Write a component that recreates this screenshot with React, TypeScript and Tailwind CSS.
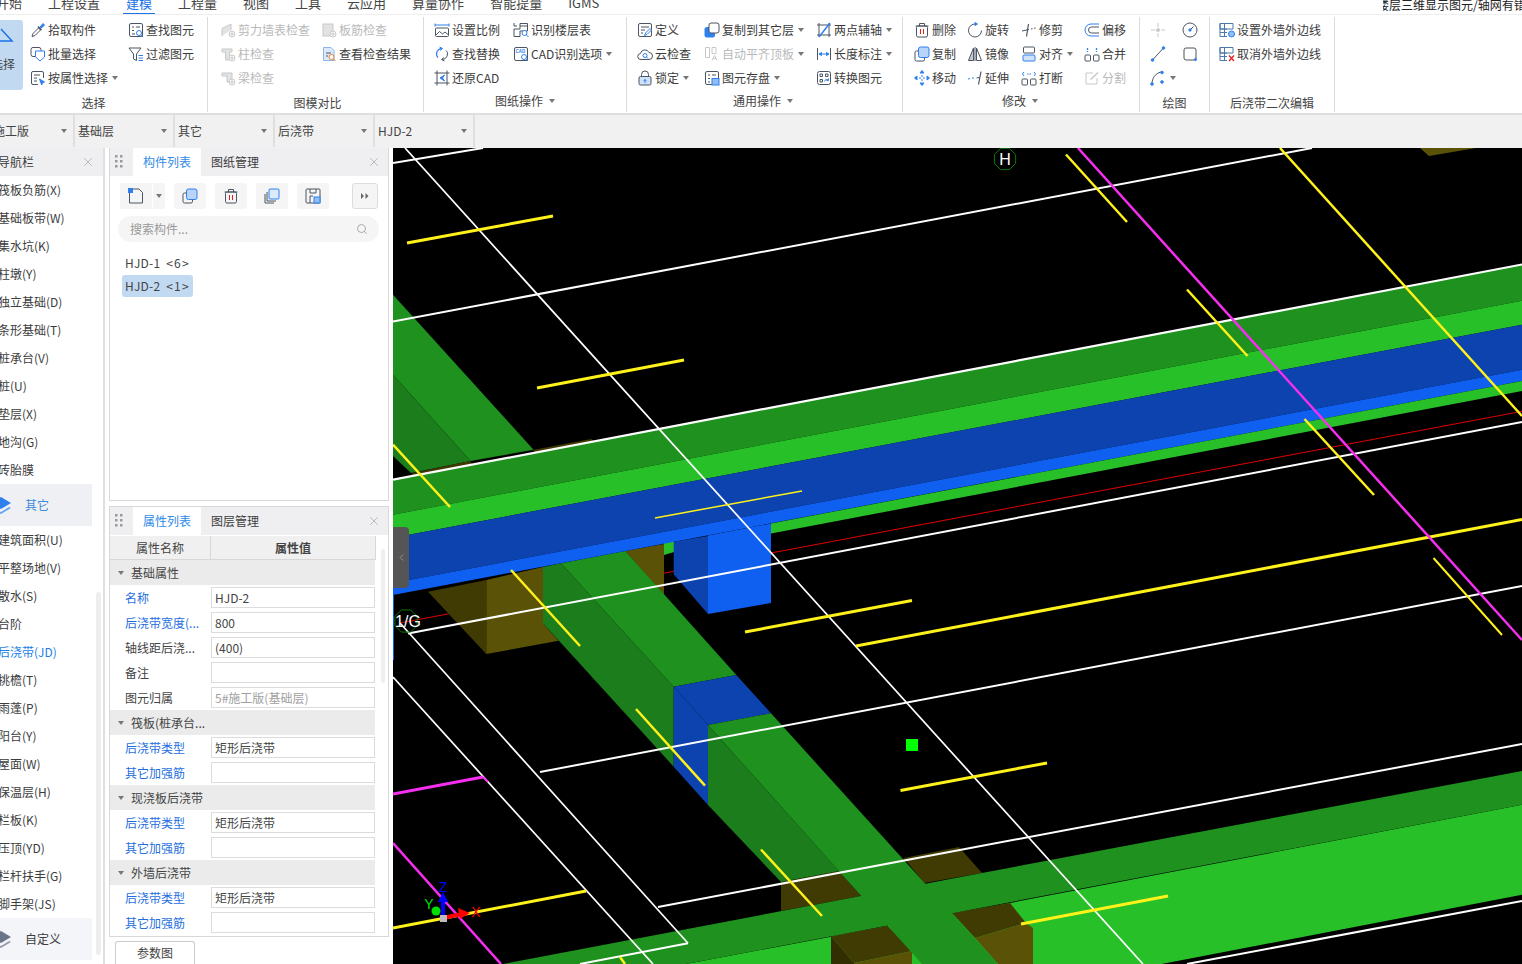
import React from 'react'
import { ChevronLeft, Search, X } from 'lucide-react'

const D = '#4b5563'
const B = '#2f80ed'
const G = '#c8c8c8'
const R = '#e02020'

const Svg = ({ children, c = D }: { children: React.ReactNode; c?: string }) => (
  <svg viewBox="0 0 16 16" className="w-4 h-4 shrink-0" fill="none" stroke={c} strokeWidth="1">
    {children}
  </svg>
)

const Caret = ({ className = '' }: { className?: string }) => (
  <svg viewBox="0 0 6 4" className={`w-[6px] h-[4px] shrink-0 ${className}`}>
    <path d="M0 0H6L3 4Z" fill="#777" />
  </svg>
)

const icons: Record<string, React.ReactNode> = {
  pick: <Svg><path d="M2 14.5l1-3 5.5-5.5 2 2L5 13.500z" /><path d="M8 4.500l3.500 3.500" stroke={D} strokeWidth="1.500" /><path d="M10 5l3-3.500 1.500 1.500-3 3z" fill={B} stroke={B} /></Svg>,
  batch: <Svg><rect x="1" y="1.500" width="10" height="9" rx="2" /><path d="M5.500 5h9v6l-4.500 4-4.500-4z" fill="#fff" stroke={B} /></Svg>,
  attr: <Svg><path d="M8 14.500H3a1.500 1.500 0 0 1-1.500-1.500V3A1.500 1.500 0 0 1 3 1.500h9A1.500 1.500 0 0 1 13.500 3v5" /><path d="M4 5h6M4 8h3M4 11h3" /><path d="M9.500 9l5 3-2 .8-.8 2.200z" fill={B} stroke={B} /></Svg>,
  find: <Svg><rect x="1.500" y="1.500" width="13" height="13" rx="1.500" /><path d="M4 5h2M8 5h4M4 8.500h2M4 12h3" /><circle cx="11" cy="11" r="2.500" fill="#fff" stroke={B} /><path d="M13 13l2 2" stroke={B} /></Svg>,
  filter: <Svg><path d="M1 2h12L8.500 8v6.500l-3-1.500V8z" /><path d="M10.500 9.500H15M10.500 12H15M10.500 14.500H15" stroke={B} /></Svg>,
  wallchk: <Svg c={G}><path d="M2 14V6.500L11 2v6" fill="#e3e3e3" /><circle cx="12" cy="12" r="3" fill="#fff" /><path d="M12 10v4M10 12h4" /></Svg>,
  barchk: <Svg c={G}><rect x="2" y="2" width="10" height="12" fill="#e3e3e3" /><circle cx="12" cy="12" r="3" fill="#fff" /><path d="M12 10v4M10 12h4" /></Svg>,
  colchk: <Svg c={G}><path d="M2 3h10v3H9.500v8h-4V6H2z" fill="#e3e3e3" /><circle cx="12" cy="12" r="3" fill="#fff" /><path d="M12 10v4M10 12h4" /></Svg>,
  beamchk: <Svg c={G}><path d="M2 3h10v9H7V6H2z" fill="#e3e3e3" /><circle cx="12" cy="12" r="3" fill="#fff" /><path d="M12 10v4M10 12h4" /></Svg>,
  result: <Svg><path d="M2.500 1.500H10l3 3v10H2.500z" fill="#dbe9fb" stroke="#8fb7ea" /><path d="M5 7h5M5 10h2" stroke={D} /><circle cx="10.500" cy="11" r="2.500" fill="#fff" stroke="#e8812b" /><path d="M12.500 13l2 2" stroke="#e8812b" /></Svg>,
  scale: <Svg><path d="M1 1.500v3M15 1.500v3M1 3h14" stroke={B} /><rect x="1.500" y="6" width="13" height="8.500" rx="1" /><path d="M2 13l3.500-3.500 3 2.500 2.500-2 3 2.500" /></Svg>,
  floor: <Svg><path d="M1 1v3h3M1 7h6V1.500h7.500V9H7v5.500H1z" /><path d="M7 4h7.500" /><circle cx="11.500" cy="11" r="2.500" fill="#fff" stroke={B} /><path d="M13.500 13l2 2" stroke={B} /></Svg>,
  replace: <Svg><path d="M8 2.500A5.500 5.500 0 0 0 2.500 8c0 1.500.5 2.500 1.500 3.500" stroke={B} strokeWidth="1.300" /><path d="M8 13.500A5.500 5.500 0 0 0 13.500 8c0-1.500-.5-2.500-1.500-3.500" /><path d="M5.500 1L8.500 2.500 6 4.500" stroke={B} /><path d="M10.500 15l-3-1.500 2.500-2" /></Svg>,
  cadopt: <Svg><rect x="1.500" y="1.500" width="13" height="13" rx="1.500" /><text x="2.500" y="7" fontSize="4.500" fontWeight="700" fill={B} stroke="none" fontFamily="Liberation Sans, sans-serif">CAD</text><circle cx="11" cy="11" r="2.500" fill="#fff" stroke={B} /><path d="M13 13l2 2" stroke={B} /></Svg>,
  restore: <Svg><path d="M3 .5v15M13 .5v15M.5 3h15M.5 13h15" /><path d="M10.500 5L6 8l4.500 3-2-3z" fill={B} stroke={B} /></Svg>,
  define: <Svg><rect x="1.500" y="1.500" width="13" height="13" rx="1.500" /><path d="M4 5h8M4 8h4M4 11h2" /><path d="M7.500 13.500l1-2.500 4.500-4.500 1.500 1.500-4.500 4.500z" fill="#fff" stroke={B} /></Svg>,
  copyto: <Svg><rect x="1" y="5.500" width="9.500" height="9.500" rx="1.500" fill={B} stroke={B} /><rect x="5" y="1" width="10" height="10" rx="2" fill="#fff" /></Svg>,
  axis2: <Svg><path d="M1 3h14M1 13h14M3 1v14M13 1v14" stroke={D} /><path d="M3 15L14 1" stroke={B} strokeWidth="1.500" /></Svg>,
  cloud: <Svg><path d="M4 13.500a3 3 0 0 1-.5-6A4.500 4.500 0 0 1 12 6.500a3.500 3.500 0 0 1 0 7z" /><circle cx="8" cy="9.500" r="2" stroke={B} /><path d="M9.500 11l1.500 1.500" stroke={B} /></Svg>,
  align: <Svg c={G}><path d="M1.500 1.500h4v10h-4zM8 1.500h4v6H8z" /><path d="M8 14.500l2.500-5 2.500 5M9 12.500h3" /></Svg>,
  dim: <Svg><path d="M1.500 2v12M14.500 2v12" /><path d="M3 8h10" stroke={B} /><path d="M3 8l2.500-1.500v3zM13 8l-2.500-1.500v3z" fill={B} stroke={B} /></Svg>,
  lock: <Svg><rect x="2" y="6.500" width="12" height="8.500" rx="1.500" fill="#cfe2fa" /><path d="M4.500 6.500V4.500a3.500 3.500 0 0 1 7 0v2" /><path d="M8 13V9.500M6.500 11L8 9.500 9.500 11" stroke={B} /></Svg>,
  store: <Svg><rect x="1.500" y="1.500" width="13" height="13" rx="1.500" /><path d="M4 5h2M8 5h4M4 8.500h2M4 12h2" /><rect x="8" y="8.500" width="7" height="6.500" fill="#8fbef5" stroke={B} /></Svg>,
  convert: <Svg><rect x="1.500" y="1.500" width="13" height="13" rx="2" /><path d="M4 4h2.500v2.500H4zM9.500 4H12v2.500H9.500zM4 9.500h2.500V12H4z" /><path d="M8.500 11.500a2.500 2.500 0 0 1 4-1.500M12.500 8.500V10.500h-2" stroke={B} /></Svg>,
  del: <Svg><path d="M1.500 4h13M5.500 4V1.500h5V4" /><rect x="2.500" y="4" width="11" height="11" rx="1.500" /><path d="M6.500 7v5M9.500 7v5" stroke={R} /></Svg>,
  rotate: <Svg><path d="M8.500 2A6.500 6.500 0 1 0 14.500 8.500" /><path d="M8 .5L10.500 2 8 3.500z" fill={B} stroke={B} /></Svg>,
  trim: <Svg><path d="M1 9l7-1.500" /><path d="M7.500 2L5.500 14.500" strokeWidth="1.200" /><path d="M10 7l1.500-.3M13 6.300l1.500-.3" /></Svg>,
  offset: <Svg><path d="M15 2H7a6 6 0 0 0 0 12h8" stroke={B} /><path d="M15 5H7.500a3 3 0 0 0 0 6H15" /></Svg>,
  copy: <Svg><rect x="1" y="5" width="9.500" height="10" rx="1.500" /><rect x="4.500" y="1" width="10.500" height="10.500" rx="2" fill="#b8d4f8" stroke={B} /></Svg>,
  mirror: <Svg><path d="M6.500 2L1.500 14.500h5z" fill="#c7ccd4" /><path d="M9.500 2l5 12.500h-5z" /><path d="M8 1v14" stroke={D} /></Svg>,
  alignb: <Svg><rect x="2.500" y="1" width="11" height="6" rx="1" /><rect x="2" y="9" width="12" height="6" rx="1" fill="#cfe2fa" stroke={B} /></Svg>,
  merge: <Svg><rect x="1" y="9" width="5.500" height="6" rx="1" /><rect x="9.500" y="9" width="5.500" height="6" rx="1" /><path d="M3.500 2v4M12.500 2v4" stroke={B} strokeWidth="1.300" strokeDasharray="2 1" /></Svg>,
  move: <Svg c={B}><path d="M8 1v14M1 8h14" strokeDasharray="2 2" /><path d="M8 .5L6 3h4zM8 15.500L6 13h4zM.5 8L3 6v4zM15.500 8L13 6v4z" fill={B} /></Svg>,
  extend: <Svg><path d="M1 9l2-.4M5 8.200l2-.4" stroke={B} /><path d="M9.500 8l3-.6" /><path d="M14 1.500L11.500 14.500" strokeWidth="1.200" /></Svg>,
  brk: <Svg><rect x="1" y="9" width="5.500" height="6" rx="1" /><rect x="9.500" y="9" width="5.500" height="6" rx="1" /><path d="M3 2l-1.500 2L3 6M13 2l1.500 2L13 6" stroke={B} /><path d="M6 4h4" stroke={B} strokeDasharray="1.500 1" /></Svg>,
  split: <Svg c={G}><path d="M9 3H2v11h11V8" /><path d="M6.500 9.500L14 2.500" strokeWidth="1.500" /></Svg>,
  point: <Svg c={G}><path d="M8 1v4M8 11v4M1 8h4M11 8h4" /><circle cx="8" cy="8" r="1.500" fill={G} /></Svg>,
  circle: <Svg><circle cx="8" cy="8" r="7" /><path d="M8 8l3.500-3.500" /><circle cx="8" cy="8" r="1.200" fill={B} stroke={B} /></Svg>,
  line: <Svg><path d="M3 13.500L13 2.500" /><circle cx="2.500" cy="14" r="1.300" fill={B} stroke={B} /><circle cx="13.500" cy="2" r="1.300" fill={B} stroke={B} /></Svg>,
  rect: <Svg><rect x="2" y="2" width="12" height="12" rx="2" /><circle cx="13.500" cy="13.500" r="1.100" fill={B} stroke={B} /></Svg>,
  arc: <Svg><path d="M2 14C2 6 8 2 12 2" /><circle cx="2" cy="14" r="1.300" fill={B} stroke={B} /><circle cx="12" cy="2.500" r="1.300" fill={B} stroke={B} /><circle cx="12" cy="12" r="1.300" fill={B} stroke={B} /></Svg>,
  wallset: <Svg><path d="M1 1.500h13V7H1zM1 1.500V14.500H8M5.500 1.500V14.500M1 7h7M1 10.500h7" stroke="#4a78ab" /><circle cx="12.500" cy="12" r="3" fill="#8fbef5" stroke={B} /></Svg>,
  wallcancel: <Svg><path d="M1 1.500h13V7H1zM1 1.500V14.500H8M5.500 1.500V14.500M1 7h7M1 10.500h7" stroke="#4a78ab" /><path d="M10 9.500l5 5.500M15 9.500l-5 5.500" stroke={R} strokeWidth="1.300" /></Svg>,
}

type It = { i: string; t?: string; a?: boolean; d?: boolean }

const Item = ({ i, t, a, d }: It) => (
  <div className={`flex items-center h-6 gap-[2px] whitespace-nowrap ${d ? 'text-[#b9b9b9]' : 'text-[#3c3c3c]'}`}>
    {icons[i]}
    {t && <span>{t}</span>}
    {a && <Caret className="ml-[2px]" />}
  </div>
)

const Col = ({ w, items }: { w: string; items: It[] }) => (
  <div className={`flex flex-col shrink-0 ${w}`}>
    {items.map((it) => <Item key={it.i} {...it} />)}
  </div>
)

const Group = ({ w, pl, label, lc = 'pt-[4px]', caret, children }: { w: string; pl: string; label: string; lc?: string; caret?: boolean; children: React.ReactNode }) => (
  <div className={`relative flex flex-col shrink-0 h-[95px] mt-[2px] border-r border-[#dcdcdc] ${w}`}>
    <div className={`flex h-[73px] pt-px ${pl}`}>{children}</div>
    <div className={`flex items-center justify-center gap-[6px] h-[22px] text-[#444] ${lc}`}>
      <span>{label}</span>
      {caret && <Caret />}
    </div>
  </div>
)

const Ribbon = () => (
  <div className="flex h-[100px] border-b-2 border-[#dfdfdf] text-[12px] leading-none">
    <Group w="w-[208px]" pl="pl-0" label="选择" lc="pt-[4px] pr-[20px]">
      <div className="w-[23px] h-[70px] mt-[2px] rounded-r-[3px] bg-[#c2d9f2] shrink-0 overflow-hidden flex flex-col items-end">
        <svg viewBox="0 0 23 22" className="w-[23px] h-[22px] mt-[5px] shrink-0" fill="none" stroke="#1a73e8" strokeWidth="1.500"><path d="M1 4l11 12H-4" /></svg>
        <span className="mt-[11px] pr-[8px] text-[#444] whitespace-nowrap">选择</span>
      </div>
      <Col w="w-[98px] ml-[7px]" items={[{ i: 'pick', t: '拾取构件' }, { i: 'batch', t: '批量选择' }, { i: 'attr', t: '按属性选择', a: true }]} />
      <Col w="" items={[{ i: 'find', t: '查找图元' }, { i: 'filter', t: '过滤图元' }]} />
    </Group>
    <Group w="w-[216px]" pl="pl-[12px]" label="图模对比" lc="pt-[4px] pl-[4px]">
      <Col w="w-[101px]" items={[{ i: 'wallchk', t: '剪力墙表检查', d: true }, { i: 'colchk', t: '柱检查', d: true }, { i: 'beamchk', t: '梁检查', d: true }]} />
      <Col w="" items={[{ i: 'barchk', t: '板筋检查', d: true }, { i: 'result', t: '查看检查结果' }]} />
    </Group>
    <Group w="w-[203px]" pl="pl-[10px]" label="图纸操作" lc="" caret>
      <Col w="w-[79px]" items={[{ i: 'scale', t: '设置比例' }, { i: 'replace', t: '查找替换' }, { i: 'restore', t: '还原CAD' }]} />
      <Col w="" items={[{ i: 'floor', t: '识别楼层表' }, { i: 'cadopt', t: 'CAD识别选项', a: true }]} />
    </Group>
    <Group w="w-[276px]" pl="pl-[10px]" label="通用操作" lc="pr-[3px]" caret>
      <Col w="w-[67px]" items={[{ i: 'define', t: '定义' }, { i: 'cloud', t: '云检查' }, { i: 'lock', t: '锁定', a: true }]} />
      <Col w="w-[112px]" items={[{ i: 'copyto', t: '复制到其它层', a: true }, { i: 'align', t: '自动平齐顶板', a: true, d: true }, { i: 'store', t: '图元存盘', a: true }]} />
      <Col w="" items={[{ i: 'axis2', t: '两点辅轴', a: true }, { i: 'dim', t: '长度标注', a: true }, { i: 'convert', t: '转换图元' }]} />
    </Group>
    <Group w="w-[237px]" pl="pl-[11px]" label="修改" lc="pr-[2px]" caret>
      <Col w="w-[53px]" items={[{ i: 'del', t: '删除' }, { i: 'copy', t: '复制' }, { i: 'move', t: '移动' }]} />
      <Col w="w-[54px]" items={[{ i: 'rotate', t: '旋转' }, { i: 'mirror', t: '镜像' }, { i: 'extend', t: '延伸' }]} />
      <Col w="w-[63px]" items={[{ i: 'trim', t: '修剪' }, { i: 'alignb', t: '对齐', a: true }, { i: 'brk', t: '打断' }]} />
      <Col w="" items={[{ i: 'offset', t: '偏移' }, { i: 'merge', t: '合并' }, { i: 'split', t: '分割', d: true }]} />
    </Group>
    <Group w="w-[70px]" pl="pl-[10px]" label="绘图">
      <Col w="w-[32px]" items={[{ i: 'point' }, { i: 'line' }, { i: 'arc', a: true }]} />
      <Col w="" items={[{ i: 'circle' }, { i: 'rect' }]} />
    </Group>
    <Group w="w-[125px]" pl="pl-[9px]" label="后浇带二次编辑">
      <Col w="" items={[{ i: 'wallset', t: '设置外墙外边线' }, { i: 'wallcancel', t: '取消外墙外边线' }]} />
    </Group>
  </div>
)

const tabs = ['开始', '工程设置', '建模', '工程量', '视图', '工具', '云应用', '算量协作', '智能提量', 'IGMS']

const TopTabs = () => (
  <div className="relative flex items-start gap-[26px] h-[15px] -ml-[4px] overflow-hidden text-[13px] leading-[14px] text-[#444] border-b border-[#eeeeee]">
    {tabs.map((t) =>
      t === '建模' ? (
        <div key={t} className="h-[19px] -mt-[4px] -mx-[3px] px-[3px] border-b-2 border-[#1a73e8] text-[#1a73e8]">{t}</div>
      ) : (
        <div key={t} className="-mt-[4px]">{t}</div>
      )
    )}
    <div className="absolute top-0 right-0 w-[139px] h-[13px] bg-white overflow-hidden text-[12px] leading-[12px] text-[#222] whitespace-nowrap">
      <span className="block -ml-[6px] -mt-px">楼层三维显示图元/轴网有错</span>
    </div>
  </div>
)

const Selector = ({ t, cls }: { t: string; cls: string }) => (
  <div className={`flex items-center justify-between h-full pl-[3px] pr-[6px] border-r-2 border-[#dfdfdf] ${cls}`}>
    <span className="whitespace-nowrap">{t}</span>
    <Caret />
  </div>
)

const Toolbar = () => (
  <div className="flex h-[33px] pb-px bg-[#f1f1f1] text-[12px] text-[#444]">
    <Selector t="施工版" cls="w-[85px] -ml-[10px]" />
    <Selector t="基础层" cls="w-[100px]" />
    <Selector t="其它" cls="w-[100px]" />
    <Selector t="后浇带" cls="w-[100px]" />
    <Selector t="HJD-2" cls="w-[100px]" />
  </div>
)

const nav1 = ['筏板负筋(X)', '基础板带(W)', '集水坑(K)', '柱墩(Y)', '独立基础(D)', '条形基础(T)', '桩承台(V)', '桩(U)', '垫层(X)', '地沟(G)', '砖胎膜']
const nav2 = ['建筑面积(U)', '平整场地(V)', '散水(S)', '台阶', '后浇带(JD)', '挑檐(T)', '雨蓬(P)', '阳台(Y)', '屋面(W)', '保温层(H)', '栏板(K)', '压顶(YD)', '栏杆扶手(G)', '脚手架(JS)']

const NavRow = ({ t }: { t: string }) => (
  <div className={`h-7 flex items-center -ml-[2px] whitespace-nowrap ${t === '后浇带(JD)' ? 'text-[#1a7fe8]' : 'text-[#3c3c3c]'}`}>{t}</div>
)

const Layers = ({ c }: { c: string }) => (
  <svg viewBox="0 0 20 20" className="w-5 h-5 -ml-[9px] shrink-0">
    <path d="M10 2l10 6-10 6L0 8z" fill={c} />
    <path d="M2 12l8 5 8-5 2 1-10 6-10-6z" fill={c} opacity=".7" />
  </svg>
)

const Nav = () => (
  <div className="relative w-[105px] shrink-0 border-r-2 border-[#dfdfdf] overflow-hidden text-[12px]">
    <div className="flex items-center justify-between h-7 pr-[8px] bg-[#efeff1] text-[#3c3c3c]">
      <span className="-ml-[2px]">导航栏</span>
      <X size={14} color="#aaa" strokeWidth={1.300} />
    </div>
    {nav1.map((t) => <NavRow key={t} t={t} />)}
    <div className="flex items-center gap-[14px] w-[92px] h-[42px] bg-[#eef0f4] text-[#3f8bdc]">
      <Layers c="#2f80ed" />
      <span>其它</span>
    </div>
    {nav2.map((t) => <NavRow key={t} t={t} />)}
    <div className="flex items-center gap-[14px] w-[92px] h-[42px] bg-[#f4f5f8] text-[#3c3c3c]">
      <Layers c="#6b7688" />
      <span>自定义</span>
    </div>
    <div className="absolute left-[96px] top-[444px] w-[5px] h-[363px] rounded-full bg-[#eeeeee]" />
  </div>
)

const Grip = () => (
  <svg viewBox="0 0 8 16" className="w-2 h-4 ml-[5px] mr-[10px] shrink-0" fill="#999">
    {[1, 6, 11].map((y) => (
      <g key={y}>
        <rect x="0" y={y} width="2.500" height="2.500" />
        <rect x="5" y={y} width="2.500" height="2.500" />
      </g>
    ))}
  </svg>
)

const PanelHead = ({ a, b }: { a: string; b: string }) => (
  <div className="flex items-end h-7 bg-[#efeff1] text-[12px]">
    <div className="flex items-center self-stretch"><Grip /></div>
    <div className="flex items-center justify-center w-[68px] self-stretch bg-white text-[#2f8ae6]">{a}</div>
    <div className="flex items-center self-stretch pl-[10px] text-[#3c3c3c]">{b}</div>
    <div className="flex items-center self-stretch ml-auto mr-[7px]"><X size={14} color="#aaa" strokeWidth={1.300} /></div>
  </div>
)

const ToolBtn = ({ children, cls = '' }: { children: React.ReactNode; cls?: string }) => (
  <div className={`flex items-center justify-center w-8 h-[26px] bg-[#f5f5f5] rounded-[3px] ${cls}`}>{children}</div>
)

const ListPanel = () => (
  <div className="h-[353px] border border-t-0 border-[#d8d8d8] text-[12px]">
    <PanelHead a="构件列表" b="图纸管理" />
    <div className="flex items-center pl-[10px] pt-[7px]">
      <ToolBtn cls="rounded-r-none">
        <svg viewBox="0 0 16 16" className="w-4 h-4" fill="none" stroke={D}>
          <path d="M1.500 5v10h13V4.500L11 1H5" />
          <rect x="0" y="0" width="5" height="5" fill={B} stroke="none" />
        </svg>
      </ToolBtn>
      <div className="flex items-center justify-center w-3 h-[26px] ml-px bg-[#f5f5f5] rounded-r-[3px]"><Caret /></div>
      <div className="flex gap-[9px] ml-[9px]">
        <ToolBtn>{icons.copy}</ToolBtn>
        <ToolBtn>{icons.del}</ToolBtn>
        <ToolBtn>
          <svg viewBox="0 0 16 16" className="w-4 h-4" fill="none" stroke={D}>
            <path d="M1 6v9h9M3 4v9h9" />
            <rect x="5" y="1" width="10" height="10" rx="1" fill="#dcebfc" stroke={B} />
          </svg>
        </ToolBtn>
        <ToolBtn>
          <svg viewBox="0 0 16 16" className="w-4 h-4" fill="none" stroke={D}>
            <rect x="1" y="1" width="14" height="14" rx="1" />
            <path d="M5 1v4h6V1M5 15V8h3" />
            <rect x="9" y="9" width="6" height="6" fill="#8fbef5" stroke={B} />
          </svg>
        </ToolBtn>
      </div>
      <div className="flex items-center justify-center w-[26px] h-[26px] ml-[23px] bg-[#f5f5f5] border border-[#dddddd] rounded-[3px]">
        <svg viewBox="0 0 8 6" className="w-2 h-[6px]" fill="#666"><path d="M0 0l3 3-3 3zM4.500 0l3 3-3 3z" /></svg>
      </div>
    </div>
    <div className="flex items-center justify-between h-[26px] mt-[7px] ml-2 mr-[9px] pl-3 pr-[11px] rounded-full bg-[#f5f5f5] text-[#999]">
      <span>搜索构件...</span>
      <Search size={12} color="#aaa" />
    </div>
    <div className="flex items-center h-[22px] mt-[10px] ml-[15px] text-[#444]">
      <span className="tracking-[0.2px]">HJD-1</span><span className="ml-[6px] tracking-[1.200px]">&lt;6&gt;</span>
    </div>
    <div className="flex items-center w-[71px] h-[22px] ml-3 mt-[1px] pl-[3px] rounded-[3px] bg-[#c2d9f2] text-[#444]">
      <span className="tracking-[0.2px]">HJD-2</span><span className="ml-[6px] tracking-[1.200px]">&lt;1&gt;</span>
    </div>
  </div>
)

type Row = { l: string; v?: string; blue?: boolean; dim?: boolean }
const section: { t: string; rows: Row[] }[] = [
  { t: '基础属性', rows: [
    { l: '名称', v: 'HJD-2', blue: true },
    { l: '后浇带宽度(...', v: '800', blue: true },
    { l: '轴线距后浇...', v: '(400)' },
    { l: '备注' },
    { l: '图元归属', v: '5#施工版(基础层)', dim: true },
  ] },
  { t: '筏板(桩承台...', rows: [{ l: '后浇带类型', v: '矩形后浇带', blue: true }, { l: '其它加强筋', blue: true }] },
  { t: '现浇板后浇带', rows: [{ l: '后浇带类型', v: '矩形后浇带', blue: true }, { l: '其它加强筋', blue: true }] },
  { t: '外墙后浇带', rows: [{ l: '后浇带类型', v: '矩形后浇带', blue: true }, { l: '其它加强筋', blue: true }] },
]

const PropPanel = () => (
  <div className="relative h-[431px] mt-[5px] border border-[#d8d8d8] overflow-hidden text-[12px]">
    <PanelHead a="属性列表" b="图层管理" />
    <div className="flex w-[266px] h-[24px] mt-px bg-[#f0f0f0] border-b border-[#d8d8d8] text-[#444]">
      <div className="flex items-center justify-center w-[101px] border-r border-[#d8d8d8]">属性名称</div>
      <div className="flex items-center justify-center flex-1 font-bold border-r border-[#d8d8d8]">属性值</div>
    </div>
    {section.map((s) => (
      <div key={s.t} className="w-[265px]">
        <div className="flex items-center h-[25px] pl-2 gap-[6px] bg-[#ebebeb] text-[#444]">
          <Caret className="mr-[1px]" />
          <span>{s.t}</span>
        </div>
        {s.rows.map((r, i) => (
          <div key={i} className="flex items-center h-[25px]">
            <div className={`w-[101px] pl-[15px] whitespace-nowrap ${r.blue ? 'text-[#1f6fe0]' : 'text-[#444]'}`}>{r.l}</div>
            <div className={`flex items-center w-[164px] h-[21px] pl-[3px] border border-[#dcdcdc] ${r.dim ? 'text-[#a0a0a0]' : 'text-[#444]'}`}>{r.v}</div>
          </div>
        ))}
      </div>
    ))}
    <div className="absolute left-[271px] top-[42px] w-[4px] h-[134px] rounded-full bg-[#eeeeee]" />
  </div>
)

type Pts = [string, string]
const polys: Pts[] = [
  // top left green
  ['393,294.7 533.5,449.7 470.5,461 393,374.7', '#1e911e'],
  ['393,374.7 470.5,461 411,473 393,456', '#1b7d1b'],
  ['413,473 470,461 472,464 411,476', '#403a03'],
  ['533,450 591,439 594,441 535,453', '#403a03'],
  // olive under main beam
  ['428,591.7 486.3,580 486.3,654', '#403a03'],
  ['486.3,580 543,567 543,623.3 558.7,640.7 486.3,654', '#5a5206'],
  ['625.3,551 664,544 664,595', '#5a5206'],
  ['664,543 674,541 674,552 664,555', '#28c028'],
  // diagonal between beam and blue patch
  ['543,567 561,563.3 673.7,686.7 673.7,766.7 543,623.3', '#1b7d1b'],
  ['561,563.3 625.3,551 736.3,675 673.7,686.7', '#1e911e'],
  // main beam
  ['393,479.7 1522,264.5 1522,300.7 393,514.7', '#1e911e'],
  ['393,514.7 1522,300.7 1522,324.7 393,537.7', '#28c028'],
  ['393,537.7 1522,324.7 1522,369.7 393,583', '#0c43af'],
  ['393,583 1522,369.7 1522,381 393,595', '#0f5ff0'],
  ['771,523.5 1522,381 1522,391 771,533.5', '#28c028'],
  // blue block
  ['673.7,541.7 708,536 708,614 673.7,574.3', '#0c43af'],
  ['708,535.5 771,523.5 771,603 708,614', '#0f5ff0'],
  // blue patch
  ['673.7,686.7 736.3,675 771,713.3 708,725', '#0c43af'],
  ['673.7,686.7 708,725 708,805 673.7,766.7', '#0c43af'],
  // lower beam, olive under the stripe
  ['686,964 1010,903 1522,804.7 1522,894.7 1161.6,964', '#28c028'],
  ['781,882 839,871 861,896 781,911', '#403a03'],
  ['903.7,858 959,847 982,873 924.4,883', '#403a03'],
  ['952,913 1010,903 1026,923 975,938', '#403a03'],
  ['975,938 1026,923 1033,928 1033,964 998,964', '#5a5206'],
  ['831,936 887.6,926 912,951 854,963', '#403a03'],
  ['854,963 912,951 912,964 854,964', '#5a5206'],
  ['831,936 854,963 854,964 831,964', '#332e02'],
  ['503,964 982,873 1522,771 1522,804.7 686,964', '#1e911e'],
  // lower diagonal
  ['708,725 771,713.3 998,964 922,964', '#1e911e'],
  ['708,725 839,871 781,882 708,805', '#1b7d1b'],
  // olive top right
  ['1420,148 1429,156 1476,148', '#5a5206'],
]

type Ln = [number, number, number, number, number]
const white: Ln[] = [
  [393, 163, 483, 148, 2],
  [393, 321.6, 1312, 148, 2],
  [393, 479.7, 1522, 264.5, 2.200],
  [408, 633.5, 1522, 422, 2],
  [540, 772, 1522, 586, 2],
  [658, 907, 1522, 744, 2],
  [688, 943.3, 580, 964, 2],
  [1187, 964, 1522, 901, 2],
  [405, 148, 1143, 964, 1.700],
  [400, 623, 688, 943.3, 1.700],
  [393, 677, 653, 964, 1.700],
]
const yellow: Ln[] = [
  [407, 243, 553, 216, 3],
  [537, 388, 684, 360, 3],
  [393, 444.7, 450, 507, 2.500],
  [655, 518, 802, 491, 1.500],
  [511, 570, 580, 646, 2.500],
  [636, 709, 705, 785.7, 2.500],
  [745, 632, 912, 600.500, 3],
  [856, 646, 1522, 519.500, 3],
  [900.500, 790.500, 1047, 763, 3],
  [761, 849.500, 822, 916, 2.500],
  [1021, 924, 1168, 896, 3],
  [393, 928, 586, 891, 3],
  [1066, 154.500, 1127, 222, 2.500],
  [1187, 289.500, 1247.500, 356, 2.500],
  [1304.500, 419, 1374, 495, 2.500],
  [1433.500, 558, 1502, 635, 2],
  [1280, 148, 1522, 416, 2.500],
  [620, 957, 625, 964, 2.500],
]
const magenta: Ln[] = [
  [1078, 148, 1522, 640, 2.500],
  [393, 794, 483, 777, 3],
  [483, 777, 488, 782, 2],
  [393, 843, 501, 964, 2.500],
]

const hex = (cx: number, cy: number, r: number) =>
  Array.from({ length: 8 }, (_, i) => {
    const a = (Math.PI / 4) * i + Math.PI / 8
    return `${cx + r * Math.cos(a)},${cy + r * Math.sin(a)}`
  }).join(' ')

const Lines = ({ list, c }: { list: Ln[]; c: string }) => (
  <>
    {list.map((l, i) => <line key={i} x1={l[0]} y1={l[1]} x2={l[2]} y2={l[3]} stroke={c} strokeWidth={l[4]} />)}
  </>
)

const Scene = () => (
  <svg viewBox="393 148 1129 816" className="block w-full h-full">
    <rect x="393" y="148" width="1129" height="816" fill="#000" />
    <line x1="400" y1="623" x2="1522" y2="411.300" stroke="#e00000" strokeWidth="1" />
    {polys.map((p, i) => <polygon key={i} points={p[0]} fill={p[1]} />)}
    <rect x="393" y="595" width="1" height="65" fill="#0f5ff0" />
    <Lines list={white} c="#ffffff" />
    <Lines list={yellow} c="#fff21a" />
    <Lines list={magenta} c="#f52ef0" />
    <polygon points={hex(1005, 159, 11.500)} fill="none" stroke="#0a7a0a" strokeWidth="1" />
    <text x="1005" y="165" textAnchor="middle" fontSize="16" fill="#fff" fontFamily="Liberation Sans, sans-serif">H</text>
    <polygon points={hex(406, 621, 12)} fill="none" stroke="#0a7a0a" strokeWidth="1" />
    <text x="408" y="627" textAnchor="middle" fontSize="16" fill="#fff" fontFamily="Liberation Sans, sans-serif">1/G</text>
    <rect x="906" y="739" width="12" height="12" fill="#00ff00" />
    {/* axis */}
    <line x1="443" y1="919" x2="443" y2="900" stroke="#0000ff" strokeWidth="4" />
    <polygon points="443,892 438,902 448,902" fill="#0000ff" />
    <circle cx="436" cy="911" r="4.500" fill="#00e000" />
    <line x1="443" y1="918" x2="462" y2="914" stroke="#ff0000" strokeWidth="4" />
    <polygon points="470,913 458,908 460,919" fill="#ff0000" />
    <rect x="440" y="915" width="7" height="7" fill="#bdbdbd" />
    <text x="443" y="892" textAnchor="middle" fontSize="14" fill="#0000ff" fontFamily="Liberation Sans, sans-serif">Z</text>
    <text x="429" y="909" textAnchor="middle" fontSize="14" fill="#00e000" fontFamily="Liberation Sans, sans-serif">Y</text>
    <text x="476" y="917" textAnchor="middle" fontSize="14" fill="#ff0000" fontFamily="Liberation Sans, sans-serif">X</text>
  </svg>
)

export default function App() {
  return (
    <div className="flex flex-col w-[1522px] h-[964px] overflow-hidden bg-white font-['Noto_Sans_CJK_SC',sans-serif]">
      <TopTabs />
      <Ribbon />
      <Toolbar />
      <div className="flex flex-1 min-h-0">
        <Nav />
        <div className="w-[280px] ml-[4px] shrink-0">
          <ListPanel />
          <PropPanel />
          <div className="flex items-center justify-center w-20 h-[23px] mt-1 ml-[6px] border border-b-0 border-[#cccccc] rounded-t-[3px] text-[12px] text-[#444]">参数图</div>
        </div>
        <div className="relative flex-1 ml-[4px]">
          <Scene />
          <div className="absolute left-0 top-[379px] flex items-center justify-center w-4 h-[61px] rounded-r-[4px] bg-[#555555]">
            <ChevronLeft size={11} color="#999" />
          </div>
        </div>
      </div>
    </div>
  )
}
